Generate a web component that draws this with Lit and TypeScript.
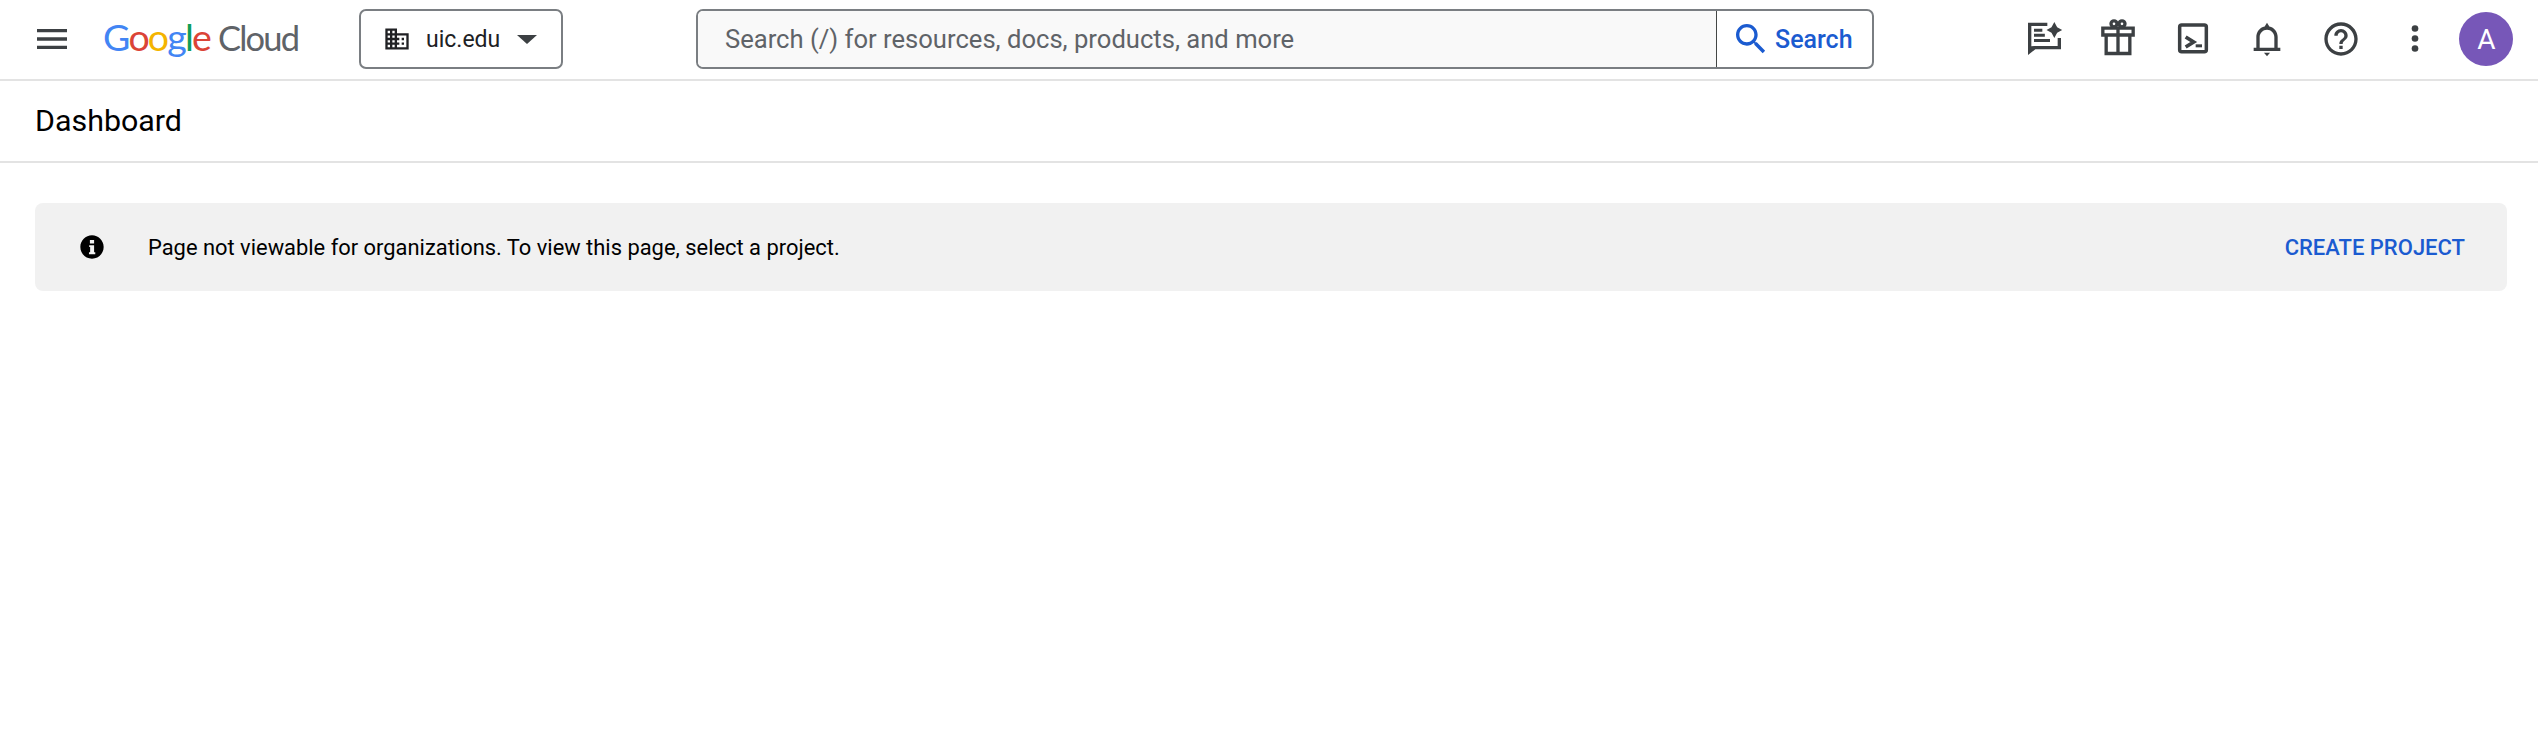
import { LitElement, html, css, svg } from 'lit';
import { customElement } from 'lit/decorators.js';

const icon = (d: unknown, size: number, cls = '') =>
  html`<svg class=${cls} width=${size} height=${size} viewBox="0 0 24 24" fill="currentColor">${d}</svg>`;

const MENU = svg`<path d="M3 18h18v-2H3v2zm0-5h18v-2H3v2zm0-7v2h18V6H3z"/>`;
const DOMAIN = svg`<path d="M12 7V3H2v18h20V7H12zM6 19H4v-2h2v2zm0-4H4v-2h2v2zm0-4H4V9h2v2zm0-4H4V5h2v2zm4 12H8v-2h2v2zm0-4H8v-2h2v2zm0-4H8V9h2v2zm0-4H8V5h2v2zm10 12h-8v-2h2v-2h-2v-2h2v-2h-2V9h8v10zm-2-8h-2v2h2v-2zm0 4h-2v2h2v-2z"/>`;
const SEARCH = svg`<path d="M15.5 14h-.79l-.28-.27C15.41 12.59 16 11.11 16 9.5 16 5.91 13.09 3 9.5 3S3 5.91 3 9.5 5.91 16 9.5 16c1.61 0 3.09-.59 4.23-1.57l.27.28v.79l5 4.99L20.49 19l-4.99-5zm-6 0C7.01 14 5 11.99 5 9.5S7.01 5 9.5 5 14 7.01 14 9.5 11.99 14 9.5 14z"/>`;
const SPARK = svg`<path d="M2.4 2.2H14V4.2H4.4v12.2L6 16.2h14.2v-4.8H22.2v6.8H6.8l-4.4 3.4z"/><path d="M6 5.8h5v1.8H6zM6 8.8h6.5v1.8H6zM6 12h9.6v1.8H6z"/><path d="M18.2 1.8l1.7 3.1 3 1.7-3 1.7-1.7 3.1-1.7-3.1-3-1.7 3-1.7z"/>`;
const GIFT = svg`<g fill="none" stroke="currentColor" stroke-width="2"><path d="M2.9 5.5h18.2v4.1H2.9zM4.9 9.6v11.1h14.2V9.6M12 5.5v15.2"/><circle cx="9.6" cy="2.9" r="1.8"/><circle cx="14.4" cy="2.9" r="1.8"/></g>`;
const TERMINAL = svg`<rect x="4" y="3.6" width="16" height="16" rx="1.2" fill="none" stroke="currentColor" stroke-width="2.1"/><path d="M7.6 10.8l4.8 3-4.8 3" fill="none" stroke="currentColor" stroke-width="2.2"/><path d="M13.6 15.2h3.8v1.8h-3.8z"/>`;
const BELL = svg`<path d="M12 2.2l1.4 2.3c3 .6 5 3.3 5 6.3v6.4H20v2H4v-2h1.6v-6.4c0-3 2-5.7 5-6.3zM12 6.4c-2.4 0-4.4 2-4.4 4.4v6.4h8.8v-6.4c0-2.4-2-4.4-4.4-4.4z"/><path d="M10.2 20.2h3.6L12 22.4z"/>`;
const HELP = svg`<path d="M11 18h2v-2h-2v2zm1-16C6.48 2 2 6.48 2 12s4.48 10 10 10 10-4.48 10-10S17.52 2 12 2zm0 18c-4.41 0-8-3.59-8-8s3.59-8 8-8 8 3.59 8 8-3.59 8-8 8zm0-14c-2.21 0-4 1.79-4 4h2c0-1.1.9-2 2-2s2 .9 2 2c0 2-3 1.75-3 5h2c0-2.25 3-2.5 3-5 0-2.21-1.79-4-4-4z"/>`;
const MORE = svg`<circle cx="12" cy="5.7" r="2"/><circle cx="12" cy="11.7" r="2"/><circle cx="12" cy="17.7" r="2"/>`;
const INFO = svg`<path fill-rule="evenodd" d="M12 2C6.48 2 2 6.48 2 12s4.48 10 10 10 10-4.48 10-10S17.52 2 12 2zM10.2 6h3.6v3h-3.6zM9.6 10.4h4.2v6.2h1v1.6H9.4v-1.6h1v-4.6h-.8z"/>`;

@customElement('app-root')
export class AppRoot extends LitElement {
  static styles = css`
    :host {
      display: block;
      min-height: 730px;
      background: #fff;
      font-family: Roboto, sans-serif;
      color: #000;
    }
    .top {
      display: flex;
      align-items: center;
      height: 78px;
      padding-bottom: 1px;
      border-bottom: 2px solid #e3e3e3;
      color: #3c4043;
    }
    .menu {
      display: flex;
      margin-left: 32px;
    }
    .logo {
      display: flex;
      align-items: baseline;
      gap: 8px;
      box-sizing: border-box;
      width: 256px;
      margin-left: 31px;
      padding-bottom: 5px;
      font-family: Lato, sans-serif;
      font-size: 37.5px;
      letter-spacing: -1.8px;
      white-space: nowrap;
    }
    .logo .cloud {
      font-size: 34.5px;
      color: #5f6368;
    }
    .blue { color: #4285f4; }
    .red { color: #db4437; }
    .yellow { color: #f4b400; }
    .green { color: #0f9d58; }
    .org {
      display: flex;
      align-items: center;
      box-sizing: border-box;
      width: 204px;
      height: 60px;
      padding-left: 22px;
      border: 2px solid #7a7e82;
      border-radius: 7px;
      font-size: 23px;
      color: #202124;
    }
    .org span { margin-left: 15px; }
    .caret {
      width: 0;
      height: 0;
      margin-left: 17px;
      border-left: 10px solid transparent;
      border-right: 10px solid transparent;
      border-top: 9px solid #3c4043;
    }
    .search {
      display: flex;
      box-sizing: border-box;
      width: 1178px;
      height: 60px;
      margin-left: 133px;
      border: 2px solid #7a7e82;
      border-radius: 7px;
      overflow: hidden;
    }
    .query {
      flex: 1;
      display: flex;
      align-items: center;
      padding-left: 27px;
      background: #f9f9f9;
      border-right: 1px solid #444746;
      font-size: 25.6px;
      color: #5f6368;
    }
    .go {
      display: flex;
      align-items: center;
      gap: 4px;
      width: 155px;
      padding-left: 14px;
      box-sizing: border-box;
      font-size: 25px;
      font-weight: 500;
      color: #1b5bd0;
    }
    .actions {
      display: flex;
      align-items: center;
      gap: 24px;
      margin-left: 150px;
    }
    .icons {
      display: flex;
      gap: 34.3px;
    }
    .icons svg { display: block; }
    .avatar {
      display: flex;
      align-items: center;
      justify-content: center;
      width: 54px;
      height: 54px;
      border-radius: 50%;
      background: #7757b8;
      color: #fff;
      font-size: 28px;
    }
    .title {
      display: flex;
      align-items: center;
      height: 78px;
      padding: 0 0 2px 35px;
      border-bottom: 2px solid #e3e3e3;
      font-size: 30.4px;
    }
    .banner {
      display: flex;
      align-items: center;
      height: 88px;
      margin: 40px 31px 0 35px;
      padding: 0 42px 0 43px;
      border-radius: 8px;
      background: #f1f1f1;
      font-size: 21.9px;
    }
    .banner svg { flex: none; }
    .msg { flex: 1; margin-left: 42px; }
    .link {
      font-size: 22px;
      font-weight: 500;
      color: #1b5bd0;
    }
  `;

  render() {
    return html`
      <header class="top">
        <div class="menu">${icon(MENU, 40)}</div>
        <div class="logo">
          <div><span class="blue">G</span><span class="red">o</span><span class="yellow">o</span><span class="blue">g</span><span class="green">l</span><span class="red">e</span></div>
          <div class="cloud">Cloud</div>
        </div>
        <div class="org">
          ${icon(DOMAIN, 28)}
          <span>uic.edu</span>
          <div class="caret"></div>
        </div>
        <div class="search">
          <div class="query">Search (/) for resources, docs, products, and more</div>
          <div class="go">${icon(SEARCH, 40)}<span>Search</span></div>
        </div>
        <div class="actions">
          <div class="icons">
            ${icon(SPARK, 40)}${icon(GIFT, 40)}${icon(TERMINAL, 40)}${icon(BELL, 40)}${icon(HELP, 40)}${icon(MORE, 40)}
          </div>
          <div class="avatar">A</div>
        </div>
      </header>
      <div class="title">Dashboard</div>
      <div class="banner">
        ${icon(INFO, 28)}
        <div class="msg">Page not viewable for organizations. To view this page, select a project.</div>
        <div class="link">CREATE PROJECT</div>
      </div>
    `;
  }
}
